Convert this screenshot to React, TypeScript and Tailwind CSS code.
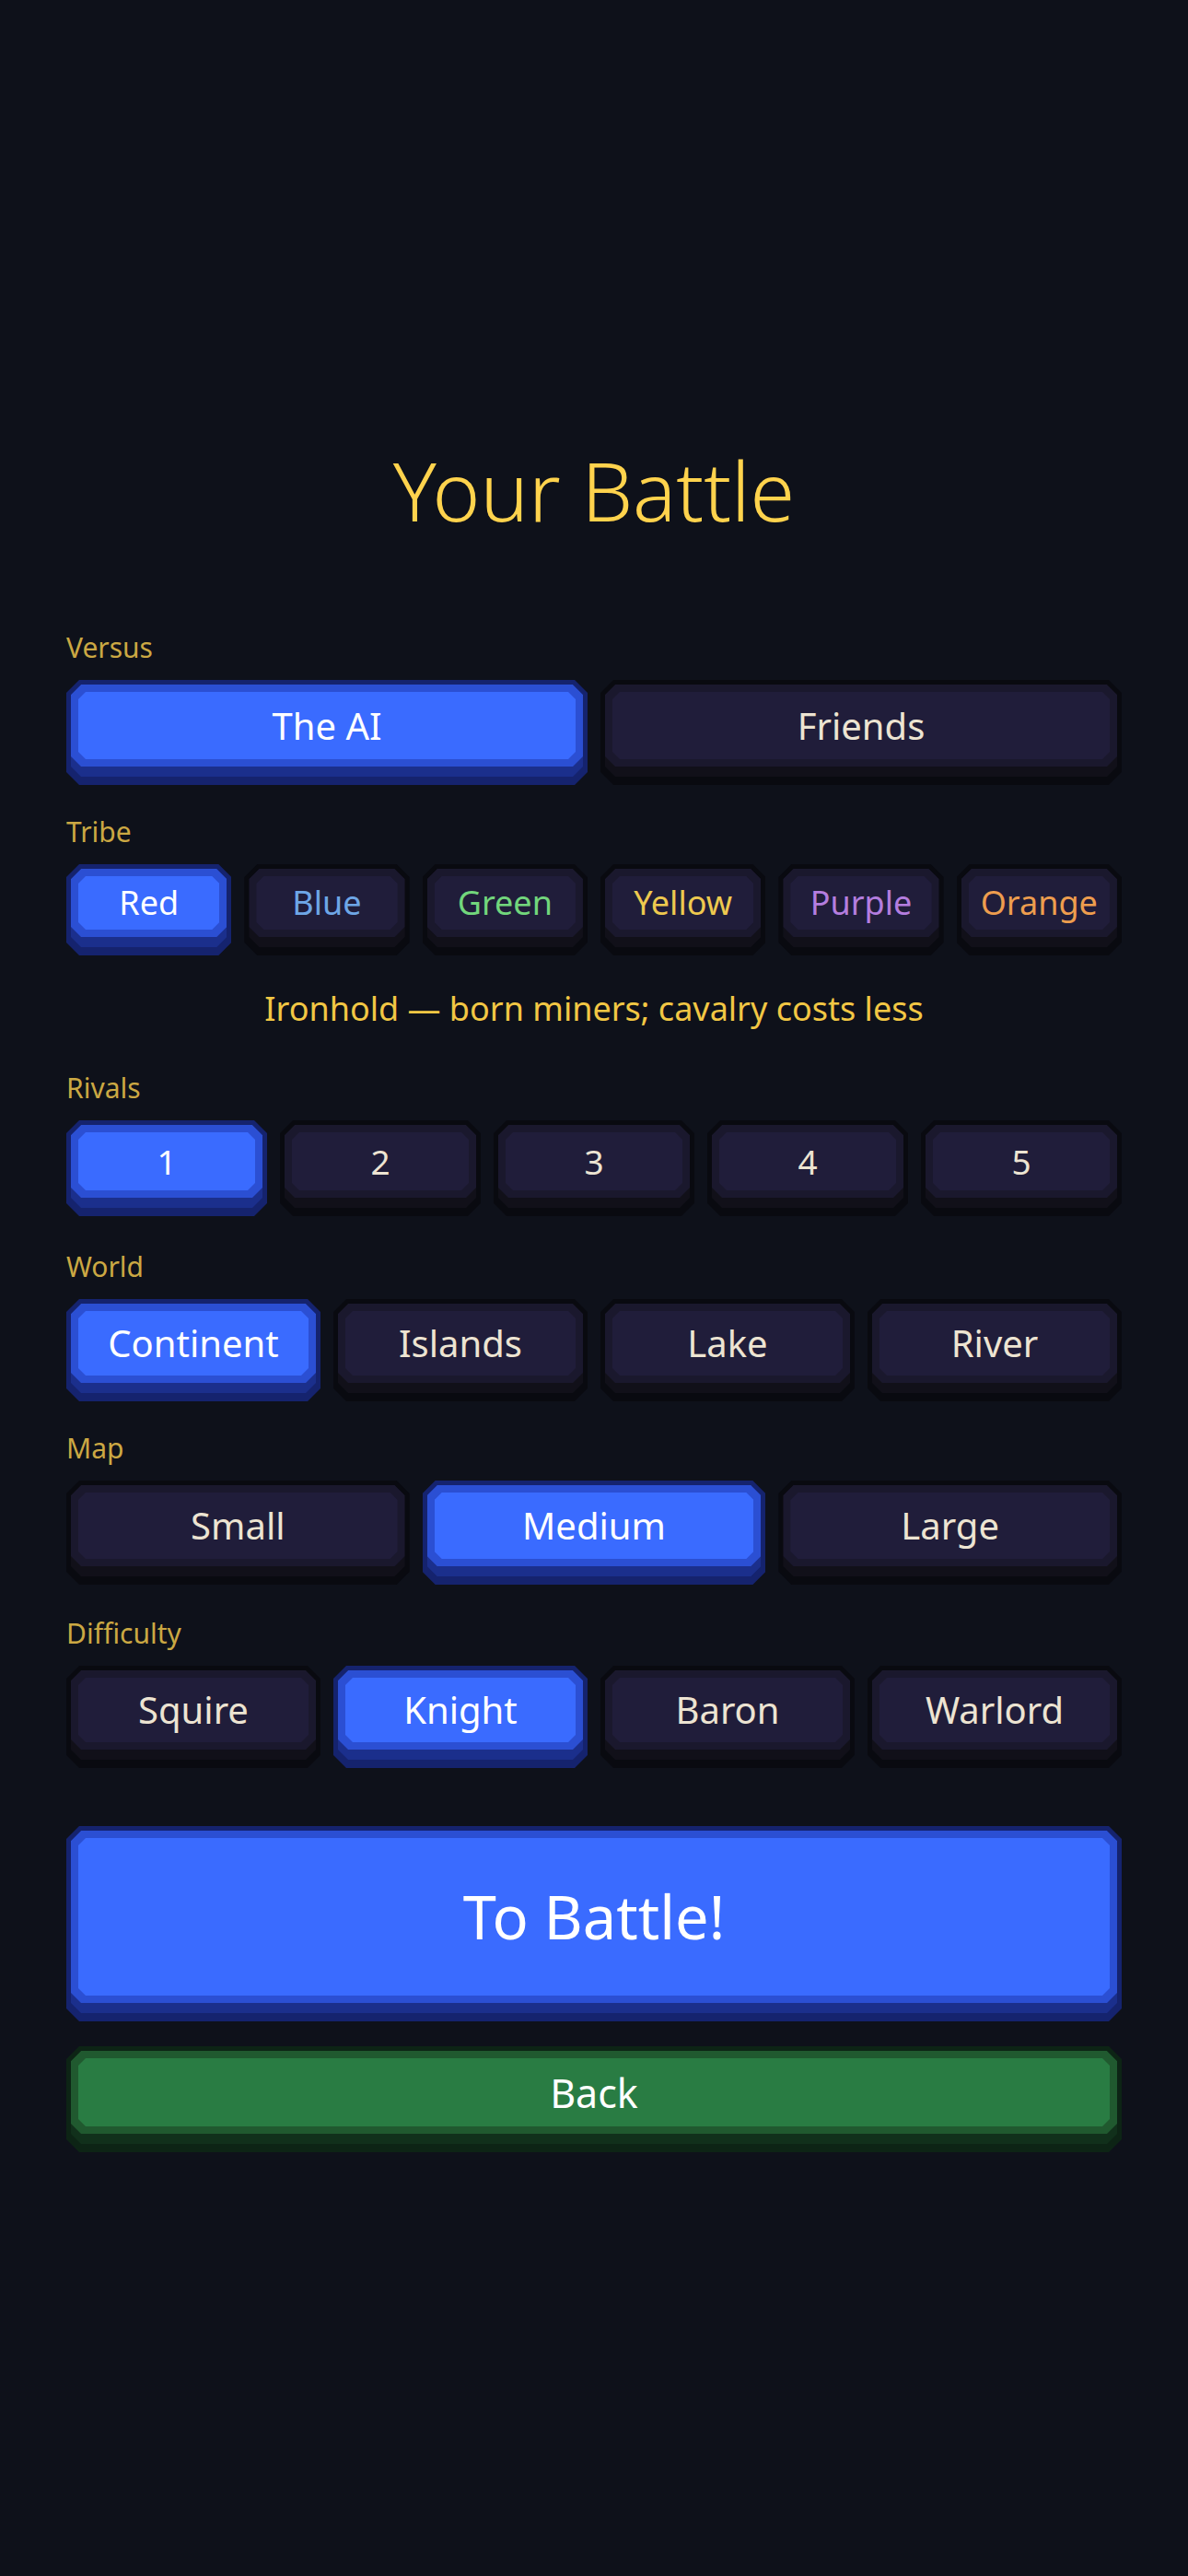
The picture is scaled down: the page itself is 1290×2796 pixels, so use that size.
import { useState } from 'react'

type Tone = 'active' | 'idle' | 'green'

const outerTone: Record<Tone, string> = {
  active: 'bg-[#15236e]',
  idle: 'bg-[#090a10]',
  green: 'bg-[#0d2415]',
}
const lipTone: Record<Tone, string> = {
  active: 'bg-[#1b2f8c]',
  idle: 'bg-[#111019]',
  green: 'bg-[#11301b]',
}
const rimTone: Record<Tone, string> = {
  active: 'bg-[#2b4fd3]',
  idle: 'bg-[#1a182d]',
  green: 'bg-[#20592f]',
}
const faceTone: Record<Tone, string> = {
  active: 'bg-[#3a6bff]',
  idle: 'bg-[#201d3a]',
  green: 'bg-[#297c43]',
}
const defaultText: Record<Tone, string> = {
  active: 'text-white',
  idle: 'text-[#ede4d2]',
  green: 'text-white',
}

const clipOuter =
  '[clip-path:polygon(14px_0,calc(100%_-_14px)_0,100%_14px,100%_calc(100%_-_14px),calc(100%_-_14px)_100%,14px_100%,0_calc(100%_-_14px),0_14px)]'
const clipMid =
  '[clip-path:polygon(11px_0,calc(100%_-_11px)_0,100%_11px,100%_calc(100%_-_11px),calc(100%_-_11px)_100%,11px_100%,0_calc(100%_-_11px),0_11px)]'
const clipFace =
  '[clip-path:polygon(8px_0,calc(100%_-_8px)_0,100%_8px,100%_calc(100%_-_8px),calc(100%_-_8px)_100%,8px_100%,0_calc(100%_-_8px),0_8px)]'

interface BtnProps {
  tone: Tone
  faceH: string
  text?: string
  textColor?: string
  children: React.ReactNode
  onClick?: () => void
}

function GameButton({ tone, faceH, text = 'text-[40px]', textColor, children, onClick }: BtnProps) {
  return (
    <button onClick={onClick} className={`min-w-0 flex-1 ${outerTone[tone]} ${clipOuter} px-[5px] pt-[5px] pb-[9px]`}>
      <div className={`${lipTone[tone]} ${clipMid} pb-[11px]`}>
        <div className={`${rimTone[tone]} ${clipMid} p-[8px]`}>
          <div
            className={`${faceTone[tone]} ${clipFace} ${faceH} ${text} ${textColor || defaultText[tone]} flex items-center justify-center leading-none`}
          >
            {children}
          </div>
        </div>
      </div>
    </button>
  )
}

function Label({ children }: { children: React.ReactNode }) {
  return <p className="mb-[17px] text-[30px] leading-[36px] text-[#cba843]">{children}</p>
}

const tribes = [
  { name: 'Red', color: '' },
  { name: 'Blue', color: 'text-[#6ea6e6]' },
  { name: 'Green', color: 'text-[#72d67c]' },
  { name: 'Yellow', color: 'text-[#eec94f]' },
  { name: 'Purple', color: 'text-[#b47ddf]' },
  { name: 'Orange', color: 'text-[#ee9d4e]' },
]

export default function App() {
  const [versus, setVersus] = useState('The AI')
  const [tribe, setTribe] = useState('Red')
  const [rivals, setRivals] = useState(1)
  const [world, setWorld] = useState('Continent')
  const [map, setMap] = useState('Medium')
  const [difficulty, setDifficulty] = useState('Knight')

  return (
    <div className="min-h-[2796px] w-full bg-[#0e111a] px-[72px] pt-[484px] font-['Noto_Sans',sans-serif]">
      <h1 className="text-center text-[88px] font-light leading-[96px] text-[#ffd34d]">Your Battle</h1>

      <section className="mt-[105px]">
        <Label>Versus</Label>
        <div className="flex gap-[14px]">
          {['The AI', 'Friends'].map((v) => (
            <GameButton key={v} tone={versus === v ? 'active' : 'idle'} faceH="h-[73px]" onClick={() => setVersus(v)}>
              {v}
            </GameButton>
          ))}
        </div>
      </section>

      <section className="mt-[33px]">
        <Label>Tribe</Label>
        <div className="flex gap-[14px]">
          {tribes.map((t) => (
            <GameButton
              key={t.name}
              tone={tribe === t.name ? 'active' : 'idle'}
              faceH="h-[58px]"
              text="text-[36px]"
              textColor={tribe === t.name ? '' : t.color}
              onClick={() => setTribe(t.name)}
            >
              {t.name}
            </GameButton>
          ))}
        </div>
      </section>

      <p className="mt-[36px] text-center text-[36px] leading-[44px] text-[#f2c744]">
        Ironhold — born miners; cavalry costs less
      </p>

      <section className="mt-[46px]">
        <Label>Rivals</Label>
        <div className="flex gap-[14px]">
          {[1, 2, 3, 4, 5].map((n) => (
            <GameButton key={n} tone={rivals === n ? 'active' : 'idle'} faceH="h-[63px]" text="text-[37px]" onClick={() => setRivals(n)}>
              {n}
            </GameButton>
          ))}
        </div>
      </section>

      <section className="mt-[37px]">
        <Label>World</Label>
        <div className="flex gap-[14px]">
          {['Continent', 'Islands', 'Lake', 'River'].map((w) => (
            <GameButton key={w} tone={world === w ? 'active' : 'idle'} faceH="h-[70px]" onClick={() => setWorld(w)}>
              {w}
            </GameButton>
          ))}
        </div>
      </section>

      <section className="mt-[33px]">
        <Label>Map</Label>
        <div className="flex gap-[14px]">
          {['Small', 'Medium', 'Large'].map((m) => (
            <GameButton key={m} tone={map === m ? 'active' : 'idle'} faceH="h-[72px]" onClick={() => setMap(m)}>
              {m}
            </GameButton>
          ))}
        </div>
      </section>

      <section className="mt-[35px]">
        <Label>Difficulty</Label>
        <div className="flex gap-[14px]">
          {['Squire', 'Knight', 'Baron', 'Warlord'].map((d) => (
            <GameButton key={d} tone={difficulty === d ? 'active' : 'idle'} faceH="h-[70px]" onClick={() => setDifficulty(d)}>
              {d}
            </GameButton>
          ))}
        </div>
      </section>

      <div className="mt-[63px] flex">
        <GameButton tone="active" faceH="h-[171px]" text="text-[65px]">
          To Battle!
        </GameButton>
      </div>

      <div className="mt-[27px] flex">
        <GameButton tone="green" faceH="h-[74px]" text="text-[43px]">
          Back
        </GameButton>
      </div>
    </div>
  )
}
